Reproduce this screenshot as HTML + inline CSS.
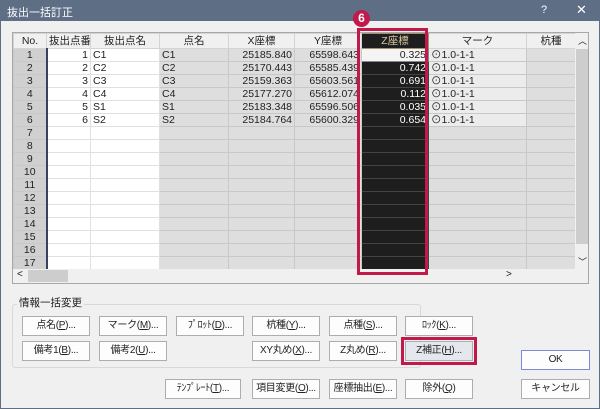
<!DOCTYPE html>
<html><head><meta charset="utf-8"><style>
*{box-sizing:border-box;margin:0;padding:0}
body{width:600px;height:409px;background:#f0f0f0;font-family:"Liberation Sans","Noto Sans CJK JP",sans-serif;font-size:11px;color:#222;position:relative;overflow:hidden}
.title{position:absolute;left:0;top:0;width:600px;height:21px;background:#5e6e85;color:#fff;font-size:11px;padding:4px 0 0 7px}
.title .q{position:absolute;left:541px;top:4px}
.title .x{position:absolute;left:576px;top:2px;font-size:13px}
.frame{position:absolute;left:0;top:21px;width:600px;height:388px;border:1px solid #5e6e85;border-top:none}
.grid{position:absolute;left:12px;top:32px;width:577px;height:252px;border:1px solid #a8a8a8;background:#f0f0f0;overflow:hidden}
table{border-collapse:collapse;table-layout:fixed;position:absolute;left:0;top:0;width:562px}
td{height:13px;border:1px solid #c8c8c8;padding:0 2px;font-size:10.5px;line-height:11px;white-space:nowrap;overflow:hidden}
tr.h td{height:15px;background:#f0f0f0;text-align:center;border-color:#d4d4d4}
td.no{background:#d0d0d0;text-align:center;border-right:2px solid #3a4060}
td.w{background:#fff;border-color:#e0e0e0}
td.g{background:#dedede}
td.z{background:#1e1e1e;color:#fff;text-align:right;border-color:#444}
td.m{background:#ececec}
.r{text-align:right}
.vs{position:absolute;left:562px;top:0;width:14px;height:236px;background:#f0f0f0}
.vs .th{position:absolute;left:1px;top:16px;width:12px;height:195px;background:#cdcdcd}
.hs{position:absolute;left:0;top:236px;width:576px;height:15px;background:#f0f0f0}
.hs .th{position:absolute;left:15px;top:1px;width:40px;height:12px;background:#cdcdcd}
.redbox{position:absolute;left:357px;top:28px;width:71px;height:247px;border:3px solid #c0194a}
.badge{position:absolute;left:353px;top:10px;width:17px;height:17px;border-radius:50%;background:#c0194a;color:#fff;font-weight:bold;font-size:12px;text-align:center;line-height:17px}
.grp{position:absolute;left:12px;top:304px;width:409px;height:64px;border:1px solid #d8d8d8;border-radius:3px}
.grpl{position:absolute;left:17px;top:295px;background:#f0f0f0;padding:0 2px;font-size:10.5px}
.b{position:absolute;height:20px;width:68px;background:#fdfdfd;border:1px solid #adadad;text-align:center;font-size:10px;line-height:18px;white-space:nowrap;overflow:hidden;letter-spacing:-0.3px}
.b u{text-decoration:underline}
</style></head><body>
<div class="title">抜出一括訂正<span class="q">?</span><span class="x">✕</span></div>
<div class="frame"></div>
<div class="grid">
<table>
<colgroup><col style="width:33px"><col style="width:44px"><col style="width:69px"><col style="width:69px"><col style="width:66px"><col style="width:67px"><col style="width:67px"><col style="width:98px"><col style="width:49px"></colgroup>
<tr class="h"><td>No.</td><td>抜出点番</td><td>抜出点名</td><td>点名</td><td>X座標</td><td>Y座標</td><td style="background:#1e1e1e;color:#d8c8a0;border:1px solid #a09070">Z座標</td><td>マーク</td><td class="r">杭種</td></tr>
<tr><td class="no">1</td><td class="w r">1</td><td class="w">C1</td><td class="g">C1</td><td class="g r">25185.840</td><td class="g r">65598.643</td><td class="r" style="background:#f4f4f4;border:1px solid #888">0.325</td><td class="m">⊙1.0-1-1</td><td class="g"></td></tr>
<tr><td class="no">2</td><td class="w r">2</td><td class="w">C2</td><td class="g">C2</td><td class="g r">25170.443</td><td class="g r">65585.439</td><td class="z">0.742</td><td class="m">⊙1.0-1-1</td><td class="g"></td></tr>
<tr><td class="no">3</td><td class="w r">3</td><td class="w">C3</td><td class="g">C3</td><td class="g r">25159.363</td><td class="g r">65603.561</td><td class="z">0.691</td><td class="m">⊙1.0-1-1</td><td class="g"></td></tr>
<tr><td class="no">4</td><td class="w r">4</td><td class="w">C4</td><td class="g">C4</td><td class="g r">25177.270</td><td class="g r">65612.074</td><td class="z">0.112</td><td class="m">⊙1.0-1-1</td><td class="g"></td></tr>
<tr><td class="no">5</td><td class="w r">5</td><td class="w">S1</td><td class="g">S1</td><td class="g r">25183.348</td><td class="g r">65596.506</td><td class="z">0.035</td><td class="m">⊙1.0-1-1</td><td class="g"></td></tr>
<tr><td class="no">6</td><td class="w r">6</td><td class="w">S2</td><td class="g">S2</td><td class="g r">25184.764</td><td class="g r">65600.329</td><td class="z">0.654</td><td class="m">⊙1.0-1-1</td><td class="g"></td></tr>
<tr><td class="no">7</td><td class="w"></td><td class="w"></td><td class="g"></td><td class="g"></td><td class="g"></td><td class="z"></td><td class="g"></td><td class="g"></td></tr>
<tr><td class="no">8</td><td class="w"></td><td class="w"></td><td class="g"></td><td class="g"></td><td class="g"></td><td class="z"></td><td class="g"></td><td class="g"></td></tr>
<tr><td class="no">9</td><td class="w"></td><td class="w"></td><td class="g"></td><td class="g"></td><td class="g"></td><td class="z"></td><td class="g"></td><td class="g"></td></tr>
<tr><td class="no">10</td><td class="w"></td><td class="w"></td><td class="g"></td><td class="g"></td><td class="g"></td><td class="z"></td><td class="g"></td><td class="g"></td></tr>
<tr><td class="no">11</td><td class="w"></td><td class="w"></td><td class="g"></td><td class="g"></td><td class="g"></td><td class="z"></td><td class="g"></td><td class="g"></td></tr>
<tr><td class="no">12</td><td class="w"></td><td class="w"></td><td class="g"></td><td class="g"></td><td class="g"></td><td class="z"></td><td class="g"></td><td class="g"></td></tr>
<tr><td class="no">13</td><td class="w"></td><td class="w"></td><td class="g"></td><td class="g"></td><td class="g"></td><td class="z"></td><td class="g"></td><td class="g"></td></tr>
<tr><td class="no">14</td><td class="w"></td><td class="w"></td><td class="g"></td><td class="g"></td><td class="g"></td><td class="z"></td><td class="g"></td><td class="g"></td></tr>
<tr><td class="no">15</td><td class="w"></td><td class="w"></td><td class="g"></td><td class="g"></td><td class="g"></td><td class="z"></td><td class="g"></td><td class="g"></td></tr>
<tr><td class="no">16</td><td class="w"></td><td class="w"></td><td class="g"></td><td class="g"></td><td class="g"></td><td class="z"></td><td class="g"></td><td class="g"></td></tr>
<tr><td class="no">17</td><td class="w"></td><td class="w"></td><td class="g"></td><td class="g"></td><td class="g"></td><td class="z"></td><td class="g"></td><td class="g"></td></tr>
</table>
<div class="vs"><div class="th"></div><span style="position:absolute;left:3px;top:1px;font-size:9px">︿</span><span style="position:absolute;left:3px;top:222px;font-size:9px">﹀</span></div>
<div class="hs"><span style="position:absolute;left:4px;top:0;font-size:10px">&lt;</span><div class="th"></div><span style="position:absolute;left:493px;top:0;font-size:10px">&gt;</span></div>
</div>
<div class="redbox"></div>
<div class="badge">6</div>
<div class="grp"></div>
<div class="grpl">情報一括変更</div>
<div class="b" style="left:22px;top:316px">点名(<u>P</u>)...</div>
<div class="b" style="left:99px;top:316px">マーク(<u>M</u>)...</div>
<div class="b" style="left:176px;top:316px">ﾌﾟﾛｯﾄ(<u>D</u>)...</div>
<div class="b" style="left:252px;top:316px">杭種(<u>Y</u>)...</div>
<div class="b" style="left:329px;top:316px">点種(<u>S</u>)...</div>
<div class="b" style="left:405px;top:316px">ﾛｯｸ(<u>K</u>)...</div>
<div class="b" style="left:22px;top:341px">備考1(<u>B</u>)...</div>
<div class="b" style="left:99px;top:341px">備考2(<u>U</u>)...</div>
<div class="b" style="left:252px;top:341px">XY丸め(<u>X</u>)...</div>
<div class="b" style="left:329px;top:341px">Z丸め(<u>R</u>)...</div>
<div class="b" style="left:405px;top:341px;background:#e4e8ee">Z補正(<u>H</u>)...</div>
<div style="position:absolute;left:401px;top:337px;width:76px;height:28px;border:3px solid #c0194a"></div>
<div class="b" style="left:521px;top:350px;width:69px;border-color:#7a8ad8">OK</div>
<div class="b" style="left:521px;top:379px;width:69px">キャンセル</div>
<div class="b" style="left:165px;top:379px;width:76px">ﾃﾝﾌﾟﾚｰﾄ(<u>T</u>)...</div>
<div class="b" style="left:252px;top:379px">項目変更(<u>O</u>)...</div>
<div class="b" style="left:329px;top:379px">座標抽出(<u>E</u>)...</div>
<div class="b" style="left:405px;top:379px">除外(<u>Q</u>)</div>
</body></html>
